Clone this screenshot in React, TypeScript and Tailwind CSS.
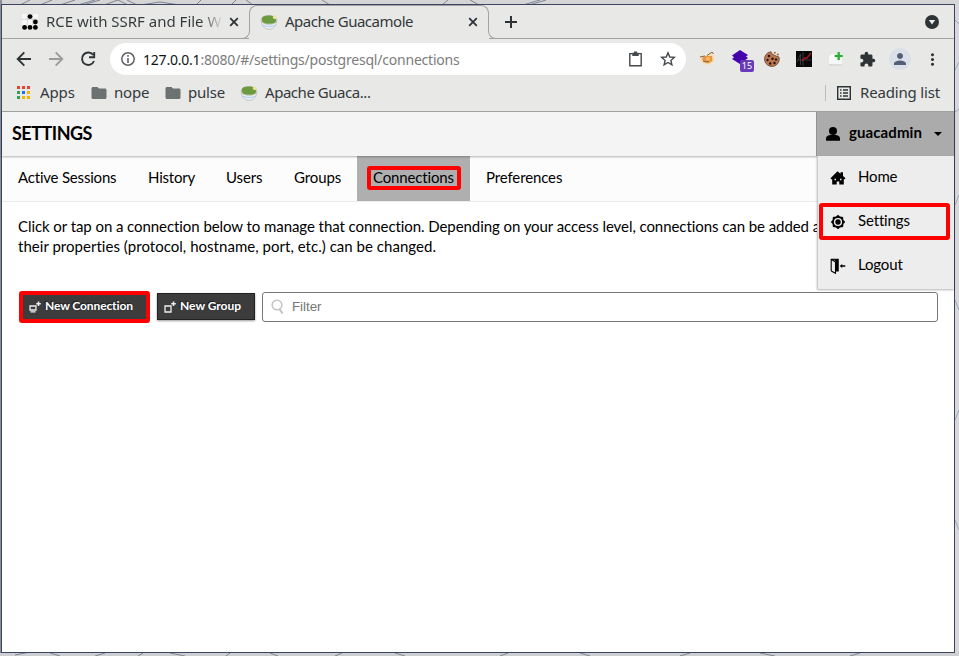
import React from "react";
import { MdPerson, MdExtension, MdMoreVert, MdFolder } from "react-icons/md";

const ui = "font-['Noto_Sans',sans-serif] text-[#33393b] whitespace-nowrap";

function Guac() {
  return (
    <svg width="18" height="16" viewBox="0 0 18 16" className="shrink-0">
      <path d="M1.2 6C1.5 11.5 4 15.2 9 15.2S16.6 11.5 16.8 6Z" fill="#f2f5f8" stroke="#b5b5b5" strokeWidth=".8" />
      <path d="M2 10.3Q9 13.3 16 10.3L15 12Q9 14.7 3 12Z" fill="#b9d2ef" />
      <ellipse cx="9" cy="6" rx="7.9" ry="4.6" fill="#e6e6dc" stroke="#aaa" strokeWidth=".5" />
      <path d="M1.8 5.6C1.5 2.6 4 1.4 9 1.4S16.2 3.6 16 6.4 13 9.8 8.5 9.8 2 8.8 1.8 5.6Z" fill="#6b9b3e" />
      <circle cx="14.8" cy="3.2" r="1.9" fill="#eee4a0" />
    </svg>
  );
}

function Close() {
  return (
    <svg width="10" height="10" viewBox="0 0 10 10" className="shrink-0">
      <path d="M1.2 1.2L8.8 8.8M8.8 1.2L1.2 8.8" stroke="#2e3436" strokeWidth="1.8" />
    </svg>
  );
}

function Wallpaper() {
  return (
    <svg className="absolute inset-0" width="959" height="656" viewBox="0 0 959 656" fill="none">
      <path d="M0 0H959V5H0Z" fill="#d5d5d6" />
      <path d="M0 0H2V656H0Z" fill="#8b9098" />
      <path d="M0 653H959V656H0Z" fill="#cdced1" />
      <path d="M20 5L30 0M40 5L52 0M60 5L75 0M78 5L95 0M83 5L100 0M104 5L118 0M118 0L128 5M127 0L137 5M140 5L160 2L180 5M196 5L201 0M231 5L236 0M246 0L253 5M322 0L330 5M442 5L448 0M470 0L479 5M523 5L540 0M529 5L546 0" stroke="#7d8594" />
      <path d="M15 655L30 652M50 653L60 656M105 653L95 656M138 656L143 653M170 653L185 656M226 656L230 653M270 653L278 656M335 656L342 653M395 653L405 656M500 656L508 653M580 653L590 656M680 656L690 653M760 653L775 656M850 656L860 653" stroke="#7d8594" />
      <path d="M955 20L959 24M955 70L959 62M955 112L959 109M955 205L959 195M955 300L959 310M955 420L959 410M955 520L959 530" stroke="#a5a8b0" />
    </svg>
  );
}

function TabStrip() {
  return (
    <div className="relative flex h-[34px] w-full shrink-0">
      <div className="flex w-[247px] items-center border-b border-[#a3a3a1] pl-5">
        <svg width="16" height="16" viewBox="0 0 16 16" className="shrink-0">
          <path d="M0 0H16V11H0Z" fill="#f7f7f7" />
          <path d="M5.3 0V11M10.6 0V11M0 5.3H16" stroke="#ccc" strokeWidth=".7" />
          <g fill="#000"><circle cx="8" cy="2.6" r="2.4" /><circle cx="13.4" cy="8" r="2.4" /><circle cx="2.6" cy="13.4" r="2.4" /><circle cx="8" cy="13.4" r="2.4" /><circle cx="13.4" cy="13.4" r="2.4" /></g>
        </svg>
        <span className={`${ui} ml-2 w-[176px] bg-linear-to-r from-[#33393b] from-88% to-[#dededd] bg-clip-text text-[15px] !text-transparent`}>RCE with SSRF and File W</span>
        <div className="ml-[7px]"><Close /></div>
      </div>
      <div className="z-10 mb-2 flex w-[240px] rounded-t-lg border-x border-t border-[#a3a3a1] pl-[10px] pr-[10px]">
        <div className="flex h-[32px] w-full items-center">
          <Guac />
          <span className={`${ui} mb-px ml-[7px] text-[15px] tracking-[-0.48px]`}>Apache Guacamole</span>
          <div className="ml-auto"><Close /></div>
        </div>
      </div>
      <div className="flex flex-1 items-center border-b border-[#a3a3a1] pl-4 pr-[15px]">
        <svg width="12" height="12" viewBox="0 0 12 12"><path d="M6 0V12M0 6H12" stroke="#2e3436" strokeWidth="2" /></svg>
        <svg className="ml-auto" width="14" height="14" viewBox="0 0 14 14"><circle cx="7" cy="7" r="7" fill="#2e3436" /><path d="M3.8 5H10.2L7 9.6Z" fill="#eee" /></svg>
      </div>
      <div className="absolute bottom-0 left-[240px] h-2 w-2 rounded-br-lg border-b border-r border-[#a3a3a1] bg-[#e8e8e7]" />
      <div className="absolute bottom-0 left-[486px] h-2 w-2 rounded-bl-lg border-b border-l border-[#a3a3a1] bg-[#e8e8e7]" />
    </div>
  );
}

function Toolbar() {
  return (
    <div className="flex h-[40px] w-full shrink-0 items-center pl-[14px] pr-3">
      <svg width="80" height="16" viewBox="0 0 80 16" className="shrink-0" fill="none" stroke="#2e3436" strokeWidth="1.9">
        <path d="M15 8H2M8.3 1.4L1.7 8L8.3 14.6" />
        <path d="M33 8H46M39.7 1.4L46.3 8L39.7 14.6" stroke="#9a9c9b" />
        <path d="M77.2 4A6.2 6.2 0 1 0 78 10M78.2 1V6.2H73" />
      </svg>
      <div className="ml-[14px] flex h-8 w-[576px] shrink-0 items-center rounded-full bg-white pl-[11px] pr-[10px]">
        <svg width="14" height="14" viewBox="0 0 14 14"><circle cx="7" cy="7" r="6.2" fill="none" stroke="#5f6368" strokeWidth="1.5" /><path d="M7 6V11M7 3V4.7" stroke="#5f6368" strokeWidth="1.6" /></svg>
        <span className={`${ui} ml-2 text-[14px] tracking-[-0.21px] !text-[#7c7c7c]`}><span className="text-[#111516]">127.0.0.1</span>:8080/#/settings/postgresql/connections</span>
        <svg className="ml-auto" width="13" height="16" viewBox="0 0 13 16" fill="none"><path d="M.8 2.6H12.2V14.7H.8Z" stroke="#45494b" strokeWidth="1.4" /><path d="M3.3 1.8H9.7V5H3.3ZM5 .4H8V2H5Z" fill="#45494b" /></svg>
        <svg className="ml-[18px]" width="16" height="16" viewBox="0 0 16 16" fill="none"><path d="M8 1.8L9.8 6L14.3 6.4L10.9 9.4L11.9 13.9L8 11.5L4.1 13.9L5.1 9.4L1.7 6.4L6.2 6Z" stroke="#45494b" strokeWidth="1.4" /></svg>
      </div>
      <svg className="ml-[14px] shrink-0" width="14" height="14" viewBox="0 0 14 14"><path d="M0 5L3 3L5 4L8 2L12 1L14 4V9L10 12.5L5 12.5L1 9.5Z" fill="#fadca9" /><path d="M2 6L6 4L12 4L12.5 9L8 11.5L3 9Z" fill="#e9953f" /><path d="M0 5L5 4M7 3.6L12 0L13.5 2M3 9L6 10L9 9" stroke="#776257" fill="none" /><circle cx="8" cy="7" r="2" fill="#ffb967" /></svg>
      <div className="relative ml-[18px] h-5 w-[22px] shrink-0">
        <svg width="16" height="16" viewBox="0 0 16 16"><path d="M8 1L16 6L14 7.5L16 9L8 15L0 10L2 8.3L0 6.5Z" fill="#4503ad" /></svg>
        <span className="absolute left-2 top-[11px] flex h-3 w-[14px] items-center justify-center rounded-xs bg-[#673bb9] font-['Noto_Sans',sans-serif] text-[9px] text-white">15</span>
      </div>
      <svg className="ml-[10px] shrink-0" width="16" height="16" viewBox="0 0 16 16"><path d="M7 .7L8 3L10 4L12 5L15 6A7.4 7.4 0 1 1 7 .7Z" fill="#bd784e" stroke="#60402f" strokeWidth=".8" /><g fill="#25150f"><circle cx="5" cy="5" r="1.3" /><circle cx="3.5" cy="9" r="1.2" /><circle cx="8.5" cy="7.7" r="1.3" /><circle cx="12" cy="8.5" r="1.2" /><circle cx="6.2" cy="12.5" r="1.2" /><circle cx="10.5" cy="12" r="1.2" /></g><g fill="#a2633f"><circle cx="10.8" cy="1.8" r="1" /><circle cx="13.8" cy="3.6" r="1" /></g></svg>
      <svg className="ml-4 shrink-0" width="16" height="16" viewBox="0 0 16 16"><path d="M0 0H16V16H0Z" fill="#080808" /><path d="M1 11L4.5 3V14M7 1V15M2 9H15" stroke="#444" strokeWidth=".8" fill="none" /><path d="M6 10L9 7L11 7L15 2" stroke="#a71823" strokeWidth="1.3" fill="none" /></svg>
      <svg className="ml-4 shrink-0" width="16" height="16" viewBox="0 0 16 16"><path d="M1 5H14V15H1Z" fill="#dcdcdc" /><path d="M1 5H14V13H1Z" fill="#f7f7f7" /><path d="M2 5Q5 1 8 5L8 9H2Z" fill="#fdfdfd" /><path d="M10.5 .5V9.5M6.5 5H15" stroke="#d9f0d9" strokeWidth="3.5" /><path d="M10.7 1V9M6.7 5H14.7" stroke="#30a936" strokeWidth="2.2" /></svg>
      <MdExtension className="ml-[15px] shrink-0 text-[#2e3436]" size={17} />
      <div className="ml-[13px] flex h-[22px] w-[22px] shrink-0 items-center justify-center rounded-full bg-[#dadfe8]"><MdPerson className="text-[#536078]" size={18} /></div>
      <MdMoreVert className="ml-auto shrink-0 text-[#2e3436]" size={19} />
    </div>
  );
}

function Bookmarks() {
  const colors = ["#e94335", "#e94335", "#e94335", "#34a055", "#1a73e8", "#f5b400", "#34a055", "#f5b400", "#f5b400"];
  return (
    <div className={`${ui} flex h-[33px] w-full shrink-0 items-center border-b border-[#a3a3a1] pb-[5px] pl-[15px] pr-[14px] text-[15px]`}>
      <svg width="13" height="13" viewBox="0 0 13 13">{colors.map((c, i) => <rect key={i} x={(i % 3) * 5} y={Math.floor(i / 3) * 5} width="3" height="3" fill={c} />)}</svg>
      <span className="ml-[10px] w-[34px] tracking-[-0.1px]">Apps</span>
      <MdFolder className="ml-[16px] text-[#6c7172]" size={18} />
      <span className="ml-[6px] w-[34px] tracking-[-0.2px]">nope</span>
      <MdFolder className="ml-[16px] text-[#6c7172]" size={18} />
      <span className="ml-[6px] w-[36px] tracking-[-0.2px]">pulse</span>
      <span className="ml-[16px]"><Guac /></span>
      <span className="ml-[7px] tracking-[-0.46px]">Apache Guaca...</span>
      <div className="ml-auto h-4 w-px bg-[#bbb]" />
      <svg className="ml-[11px]" width="14" height="14" viewBox="0 0 14 14" fill="none" stroke="#2e3436" strokeWidth="1.4"><path d="M.7 .7H13.3V13.3H.7Z" /><path d="M3 4H4.5M3 7H4.5M3 10H4.5M6 4H11M6 7H11M6 10H11" /></svg>
      <span className="ml-[9px] tracking-[-0.18px]">Reading list</span>
    </div>
  );
}

function House() {
  return (
    <svg width="16" height="16" viewBox="0 0 16 16">
      <path d="M7.5 1.2L10.5 3.7V2.3H13V6L15.5 8.3L14.7 9.2H13.8V14.5H9.3V11.5H6.7V14.5H2.2V9.2H1.2L.5 8.3Z" />
      <path d="M4.5 8.8H6V10.3H4.5ZM10 8.8H11.5V10.3H10Z" fill="#ededed" />
    </svg>
  );
}

function Door() {
  return <svg width="16" height="16" viewBox="0 0 16 16"><path d="M1.2 13V1.3H8.2V13H6M1.2 13L5.5 15.3V4L1.2 1.3" fill="none" stroke="#000" strokeWidth="1.1" /><path d="M3 1.3H8V13H5.8V3.5Z" fill="#000" /><path d="M9.7 8L12.2 6V7.2H15.3V8.8H12.2V10Z" fill="#000" /></svg>;
}

function Gear() {
  return <svg width="16" height="16" viewBox="0 0 16 16"><path d="M8 .8L10 2.6L13.1 2.9L13.4 6L15.2 8L13.4 10L13.1 13.1L10 13.4L8 15.2L6 13.4L2.9 13.1L2.6 10L.8 8L2.6 6L2.9 2.9L6 2.6Z" /><circle cx="8" cy="8" r="3.4" fill="none" stroke="#eee" strokeWidth="1.4" /></svg>;
}

function NewIcon({ round = false }: { round?: boolean }) {
  return <svg width="12" height="12" viewBox="0 0 12 12" fill="none" stroke="#eee" className="mt-px"><path d={round ? "M1 5H7V9H1ZM1.5 10.8H6.5" : "M1 5H7V11H1Z"} strokeWidth="1.3" /><path d="M9.5 .5V5.1M7.2 2.8H11.8" strokeWidth="1.5" /></svg>;
}

const tabs: [string, string, string][] = [
  ["Active Sessions", "w-[130px]", "tracking-[-0.2px]"],
  ["History", "w-[78px]", "tracking-[-0.2px]"],
  ["Users", "w-[68px]", "tracking-[-0.1px]"],
  ["Groups", "w-[79px]", "tracking-[-0.1px]"],
  ["Connections", "w-[113px]", "tracking-[-0.15px]"],
  ["Preferences", "w-[109px]", "tracking-[-0.13px]"],
];

export default function App() {
  return (
    <div className="relative h-[656px] w-[959px] overflow-hidden bg-[#d8d8da] pl-px pt-1">
      <Wallpaper />
      <div className="relative flex h-[649px] w-[954px] flex-col border border-[#3b4560] bg-[#e8e8e7]">
        <TabStrip />
        <Toolbar />
        <Bookmarks />
        <main className="relative flex-1 bg-white font-['Lato',sans-serif] text-[15px] text-black">
          <header className="relative z-10 flex h-11 items-stretch justify-between bg-[#f4f4f4] shadow-[0_1px_2px_rgba(0,0,0,0.3)]">
            <h1 className="flex items-center pb-0.5 pl-[10px] text-[18px] font-bold tracking-[-0.5px]">SETTINGS</h1>
            <div className="relative flex w-[138px] items-center border-l border-[#929292] bg-[#ababab] pl-[9px]">
              <svg width="14" height="16" viewBox="0 0 14 16"><circle cx="7" cy="5" r="4" /><path d="M0 14.8V12.5Q0 9.5 4 9H10Q14 9.5 14 12.5V14.8Z" /></svg>
              <span className="mb-[3px] ml-[9px] w-[74px] whitespace-nowrap text-[15px] font-bold tracking-[0.1px]">guacadmin</span>
              <svg className="ml-[11px]" width="8" height="4" viewBox="0 0 8 4"><path d="M0 0H8L4 4Z" /></svg>
              <nav className="absolute right-0 top-11 h-[133px] w-[137px] border-l border-[#ccc] bg-[#ededed] shadow-[0_1px_2px_rgba(0,0,0,0.3)]">
                {[["Home", <House key="h" />], ["Settings", <Gear key="s" />], ["Logout", <Door key="l" />]].map(([label, icon], i) => (
                  <div key={i} className="flex h-11 items-center pb-1 pl-3">
                    <span className="mt-1">{icon}</span><span className="ml-3 tracking-[-0.15px]">{label}</span>
                  </div>
                ))}
                <div className="absolute left-[1px] top-[47px] h-[37px] w-[131px] rounded-[3px] border-4 border-[#fe0000]" />
              </nav>
            </div>
          </header>
          <div className="flex h-[46px] border-b border-[#ebebeb] bg-[#fcfcfc]">
            {tabs.map(([label, width, tracking]) => (
              <div key={label} className={`${width} relative flex items-center whitespace-nowrap pb-0.5 pl-4 ${tracking} ${label === "Connections" ? "bg-[#afafaf]" : ""}`}>
                {label}
                {label === "Connections" && <div className="absolute left-[10px] top-[10px] h-6 w-[94px] rounded-[3px] border-4 border-[#fe0000]" />}
              </div>
            ))}
          </div>
          <p className="whitespace-nowrap pl-4 pt-[14px] leading-5"><span className="tracking-[-0.07px]">Click or tap on a connection below to manage that connection. Depending on your access level, connections can be added and</span><br /><span className="tracking-[0.03px]">their properties (protocol, hostname, port, etc.) can be changed.</span></p>
          <div className="mt-[35px] flex items-center pl-[17px] pr-4">
            <button className="flex h-8 w-[131px] items-center whitespace-nowrap rounded-[3px] border-4 border-[#fe0000] bg-[#3c3c3c] pb-0.5 pl-[6px] text-[12px] font-bold tracking-[-0.1px] text-white [text-shadow:-1px_-1px_1px_#0008]"><NewIcon round /><span className="ml-1">New Connection</span></button>
            <button className="mb-px ml-[7px] flex h-[27px] w-[98px] items-center whitespace-nowrap border border-[#202020] bg-[#3c3c3c] pb-px pl-[6px] text-[12px] font-bold text-white shadow-[0_1px_2px_#0006] [text-shadow:-1px_-1px_1px_#0008]"><NewIcon /><span className="ml-1">New Group</span></button>
            <div className="ml-[7px] flex h-[30px] flex-1 items-center rounded-[3px] border border-[#777] bg-white pl-[8px]">
              <svg width="14" height="16" viewBox="0 0 14 16" fill="none" stroke="#c4c4c4"><circle cx="6" cy="6" r="4.8" strokeWidth="1.6" /><path d="M8.5 10L11.5 14.5" strokeWidth="2.2" /></svg>
              <span className="ml-[7px] font-['Liberation_Sans',sans-serif] text-[13.3px] text-[#757575]">Filter</span>
            </div>
          </div>
        </main>
      </div>
    </div>
  );
}
